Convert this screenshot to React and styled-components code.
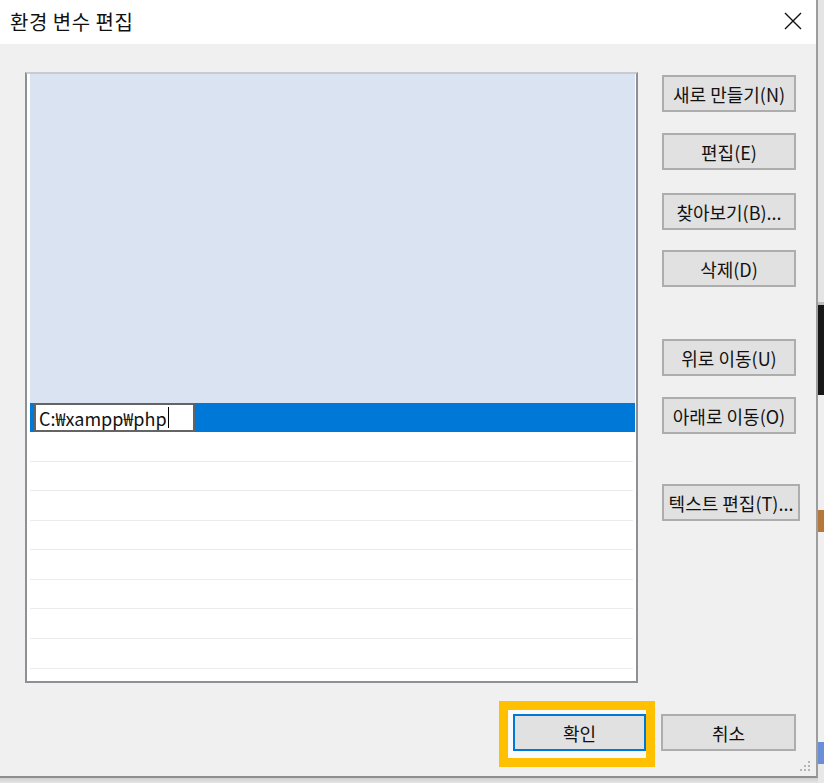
import React from "react";
import styled, { createGlobalStyle } from "styled-components";

const Global = createGlobalStyle`
  html, body { margin: 0; padding: 0; background: #d6d6d6; }
  body { font-family: "Noto Sans CJK KR", "Noto Sans", sans-serif; color: #000; }
  * { box-sizing: border-box; }
`;

const Screen = styled.div`
  display: flex;
  width: 824px;
  height: 783px;
  overflow: hidden;
  background: #d9d9d9;
`;

const WindowCol = styled.div`
  display: flex;
  flex-direction: column;
  width: 818px;
  flex: none;
`;

const Window = styled.div`
  position: relative;
  display: flex;
  flex-direction: column;
  height: 778px;
  border-right: 2px solid #9d9d9d;
  border-bottom: 2px solid #8f8f8f;
  background: #f0f0f0;
`;

const Shade = styled.div`
  flex: 1;
  background: linear-gradient(#cfcfcf, #e6e6e6);
`;

const TitleBar = styled.div`
  display: flex;
  align-items: center;
  justify-content: space-between;
  height: 44px;
  padding: 0 14px 2px 10px;
  background: #ffffff;
  flex: none;
`;

const Title = styled.div`
  font-size: 20px;
  letter-spacing: 0.5px;
  color: #111;
`;

const CloseIcon = styled.svg`
  width: 18px;
  height: 18px;
  display: block;
`;

const Body = styled.div`
  flex: 1;
  display: flex;
  flex-direction: column;
  padding: 28px 16px 23px 25px;
`;

const MainRow = styled.div`
  display: flex;
  gap: 24px;
`;

const ListBox = styled.div`
  flex: none;
  width: 613px;
  height: 611px;
  border: 2px solid #8e9096;
  border-top-color: #c9cbd0;
  background: #ffffff;
  padding: 0 1px 0 3px;
  display: flex;
  flex-direction: column;
  overflow: hidden;
`;

const EmptyBlock = styled.div`
  height: 329px;
  background: #dae3f2;
  flex: none;
`;

const SelectedRow = styled.div`
  height: 29px;
  background: #0078d7;
  display: flex;
  align-items: stretch;
  padding-left: 4px;
  flex: none;
`;

const EditBox = styled.div`
  width: 161px;
  background: #fff;
  border: 2px solid #646464;
  display: flex;
  align-items: center;
  padding-left: 3px;
  font-size: 18px;
  line-height: 1;
  color: #111;
`;

const Caret = styled.span`
  display: inline-block;
  width: 1.5px;
  height: 21px;
  background: #000;
  margin-left: 1px;
`;

const Row = styled.div`
  height: 29.57px;
  border-bottom: 1.5px solid #ececec;
  margin-right: 2px;
  flex: none;
`;

const ButtonCol = styled.div`
  display: flex;
  flex-direction: column;
  padding-top: 3px;
  flex: none;
`;

const Btn = styled.button`
  width: ${(p) => p.$w || 134}px;
  height: 37px;
  margin-top: ${(p) => p.$mt || 0}px;
  background: #e1e1e1;
  border: ${(p) => (p.$focus ? "2px solid #0078d7" : "2px solid #adadad")};
  font-family: "Noto Sans CJK KR", "Noto Sans", sans-serif;
  font-size: 18px;
  color: #111;
  padding: 0 1px;
  white-space: nowrap;
  display: flex;
  align-items: center;
  justify-content: center;
  flex: none;
`;

const Footer = styled.div`
  display: flex;
  justify-content: flex-end;
  gap: 15px;
  margin-top: 31px;
  padding-right: 4px;
`;

const Highlight = styled.div`
  position: relative;
`;

const HighlightFrame = styled.span`
  position: absolute;
  left: -14px;
  right: -9px;
  top: -13px;
  bottom: -16px;
  border: 9px solid #ffc000;
  background: #fafafa;
  z-index: 0;
`;

const FocusWrap = styled.div`
  position: relative;
  z-index: 1;
`;

const Grip = styled.svg`
  position: absolute;
  right: 4px;
  bottom: 3px;
  width: 14px;
  height: 14px;
`;

const Strip = styled.div`
  width: 6px;
  flex: none;
  display: flex;
  flex-direction: column;
`;

const StripPart = styled.div`
  height: ${(p) => p.$h}px;
  background: ${(p) => p.$c};
  flex: ${(p) => (p.$h ? "none" : 1)};
`;

export default function App() {
  const rows = Array.from({ length: 8 });
  return (
    <>
      <Global />
      <Screen>
        <WindowCol>
          <Window>
            <TitleBar>
              <Title>환경 변수 편집</Title>
              <CloseIcon viewBox="0 0 18 18">
                <path d="M1 1 L17 17 M17 1 L1 17" stroke="#111" strokeWidth="1.4" fill="none" />
              </CloseIcon>
            </TitleBar>
            <Body>
              <MainRow>
                <ListBox>
                  <EmptyBlock />
                  <SelectedRow>
                    <EditBox>
                      C:₩xampp₩php<Caret />
                    </EditBox>
                  </SelectedRow>
                  {rows.map((_, i) => (
                    <Row key={i} />
                  ))}
                </ListBox>
                <ButtonCol>
                  <Btn>새로 만들기(N)</Btn>
                  <Btn $mt={21}>편집(E)</Btn>
                  <Btn $mt={23}>찾아보기(B)...</Btn>
                  <Btn $mt={20}>삭제(D)</Btn>
                  <Btn $mt={52}>위로 이동(U)</Btn>
                  <Btn $mt={21}>아래로 이동(O)</Btn>
                  <Btn $mt={50} $w={138}>텍스트 편집(T)...</Btn>
                </ButtonCol>
              </MainRow>
              <Footer>
                <Highlight>
                  <HighlightFrame />
                  <FocusWrap>
                    <Btn $w={133} $focus>확인</Btn>
                  </FocusWrap>
                </Highlight>
                <Btn $w={135}>취소</Btn>
              </Footer>
            </Body>
            <Grip viewBox="0 0 14 14">
              {[[10, 2], [6, 6], [10, 6], [2, 10], [6, 10], [10, 10]].map(([x, y], i) => (
                <rect key={i} x={x} y={y} width="2" height="2" fill="#b5b5b5" />
              ))}
            </Grip>
          </Window>
          <Shade />
        </WindowCol>
        <Strip>
          <StripPart $h={302} $c="#e4e4e4" />
          <StripPart $h={3} $c="#bdbdbd" />
          <StripPart $h={90} $c="#171717" />
          <StripPart $h={115} $c="#efefef" />
          <StripPart $h={22} $c="#b8773a" />
          <StripPart $h={210} $c="#f0f0f0" />
          <StripPart $h={22} $c="#6b8fd6" />
          <StripPart $c="#e8e8e8" />
        </Strip>
      </Screen>
    </>
  );
}
